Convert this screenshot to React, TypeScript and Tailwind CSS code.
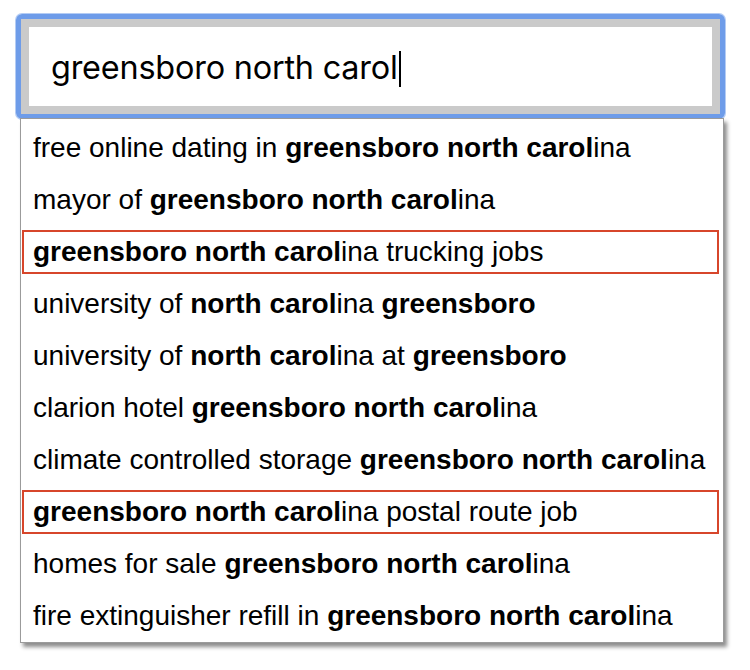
import React from "react";

type Part = { t: string; b?: boolean };

const suggestions: { parts: Part[]; marked?: boolean }[] = [
  { parts: [{ t: "free online dating in " }, { t: "greensboro north carol", b: true }, { t: "ina" }] },
  { parts: [{ t: "mayor of " }, { t: "greensboro north carol", b: true }, { t: "ina" }] },
  { parts: [{ t: "greensboro north carol", b: true }, { t: "ina trucking jobs" }], marked: true },
  { parts: [{ t: "university of " }, { t: "north carol", b: true }, { t: "ina " }, { t: "greensboro", b: true }] },
  { parts: [{ t: "university of " }, { t: "north carol", b: true }, { t: "ina at " }, { t: "greensboro", b: true }] },
  { parts: [{ t: "clarion hotel " }, { t: "greensboro north carol", b: true }, { t: "ina" }] },
  { parts: [{ t: "climate controlled storage " }, { t: "greensboro north carol", b: true }, { t: "ina" }] },
  { parts: [{ t: "greensboro north carol", b: true }, { t: "ina postal route job" }], marked: true },
  { parts: [{ t: "homes for sale " }, { t: "greensboro north carol", b: true }, { t: "ina" }] },
  { parts: [{ t: "fire extinguisher refill in " }, { t: "greensboro north carol", b: true }, { t: "ina" }] },
];

export default function App() {
  return (
    <div className="w-[750px] h-[670px] bg-white pl-[16px] pt-[14px] font-['Liberation_Sans',Arial,sans-serif] text-black">
      {/* Search input with focus ring */}
      <div className="w-[709px] h-[105px] rounded-[6px] border-[5px] border-[#6e9ce9] shadow-[0_0_0_1px_#b4ccf4]">
        <div className="h-full border-[8px] border-[#cacaca] bg-white flex items-center pl-[22px] pt-[4px]">
          <span className="text-[32.4px] font-['Inter',sans-serif] tracking-[-0.2px] leading-none">greensboro north carol</span>
          <span className="inline-block w-[2px] h-[36px] bg-black ml-[1px]" />
        </div>
      </div>

      {/* Suggestions dropdown */}
      <div className="ml-[4px] -mt-[1px] w-[704px] border border-[#9b9b9b] bg-white pt-[3px] shadow-[3px_4px_4px_rgba(0,0,0,0.45)]">
        {suggestions.map((s, i) => (
          <div key={i} className="h-[52px] flex items-center">
            <div
              className={
                "ml-[1px] mr-[4px] flex-1 h-[44px] flex items-center pl-[9px] border-2 " +
                (s.marked ? "border-[#d7462b]" : "border-transparent")
              }
            >
              <span className="text-[28px] whitespace-pre leading-none">
                {s.parts.map((p, j) =>
                  p.b ? (
                    <b key={j} className="font-bold">
                      {p.t}
                    </b>
                  ) : (
                    <span key={j}>{p.t}</span>
                  )
                )}
              </span>
            </div>
          </div>
        ))}
      </div>
    </div>
  );
}
